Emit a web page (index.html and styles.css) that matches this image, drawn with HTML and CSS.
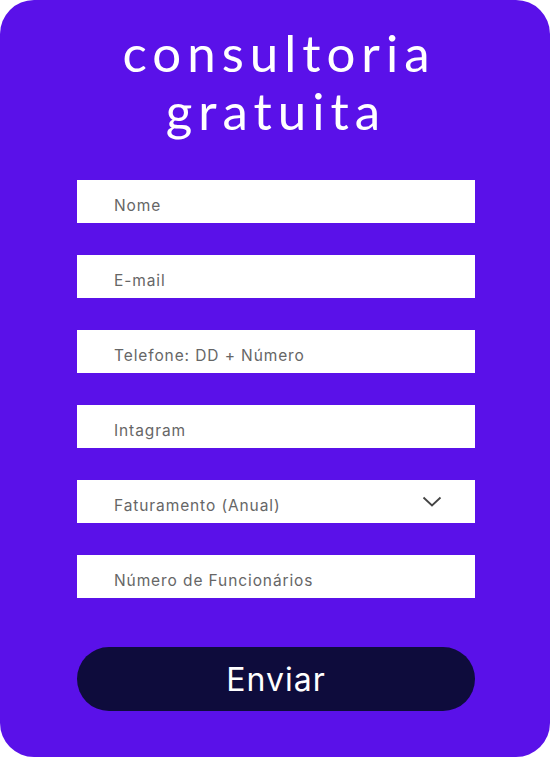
FILE: index.html
```html
<!DOCTYPE html>
<html lang="pt-BR">
<head>
<meta charset="utf-8">
<title>Consultoria gratuita</title>
<link rel="stylesheet" href="styles.css">
</head>
<body>
<main class="card">
  <h1 class="title">consultoria<br>gratuita</h1>
  <form class="form">
    <div class="field"><span class="ph">Nome</span></div>
    <div class="field"><span class="ph">E-mail</span></div>
    <div class="field"><span class="ph">Telefone: DD + Número</span></div>
    <div class="field"><span class="ph">Intagram</span></div>
    <div class="field select"><span class="ph">Faturamento (Anual)</span>
      <svg class="chev" width="20" height="12" viewBox="0 0 20 12"><path d="M1.5 1.5 L10 9.5 L18.5 1.5" fill="none" stroke="#444" stroke-width="1.8"/></svg>
    </div>
    <div class="field"><span class="ph">Número de Funcionários</span></div>
    <button type="button" class="send">Enviar</button>
  </form>
</main>
</body>
</html>
```
FILE: styles.css
```css
html, body { margin: 0; padding: 0; background: #fff; }
.card {
  width: 550px;
  height: 757px;
  background: #5a11e9;
  border-radius: 34px;
  box-sizing: border-box;
  padding-top: 24px;
  padding-left: 2px;
  display: flex;
  flex-direction: column;
  align-items: center;
}
.title {
  margin: 0;
  color: #fff;
  font-family: "Lato", "DejaVu Sans", sans-serif;
  font-weight: 400;
  font-size: 51px;
  line-height: 58px;
  letter-spacing: 6px;
  text-indent: 6px;
  text-align: center;
}
.form {
  margin-top: 40px;
  width: 398px;
  display: flex;
  flex-direction: column;
  gap: 32px;
}
.field {
  height: 43px;
  background: #fff;
  display: flex;
  align-items: center;
  padding: 7px 0 0 37px;
  box-sizing: border-box;
  font-family: "Inter", "Open Sans", sans-serif;
  font-size: 15.5px;
  letter-spacing: 0.9px;
  color: #666;
}
.select { justify-content: space-between; padding-right: 33px; }
.chev { margin-top: -6px; }
.send {
  margin-top: 17px;
  height: 64px;
  border: 0;
  border-radius: 32px;
  background: #0e0c3c;
  color: #fff;
  font-family: "Inter", "Open Sans", sans-serif;
  font-size: 32px;
  font-weight: 400;
  letter-spacing: 1px;
  padding: 0;
}
```
